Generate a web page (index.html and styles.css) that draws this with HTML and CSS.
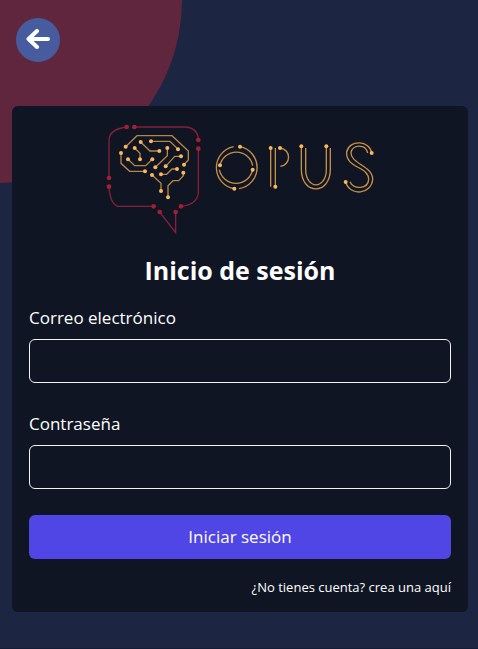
FILE: index.html
```html
<!DOCTYPE html>
<html lang="es">
<head>
<meta charset="utf-8">
<meta name="viewport" content="width=device-width, initial-scale=1">
<title>Opus</title>
<link rel="stylesheet" href="styles.css">
</head>
<body>
<div class="backdrop"></div>
<header class="topbar">
  <button class="back" type="button" aria-label="Volver">
    <svg width="24" height="20" viewBox="0 0 24 20" aria-hidden="true"><path d="M11 2 2.500 10l8.500 8M3 10h19"/></svg>
  </button>
</header>
<main class="card">
  <svg class="logo" viewBox="0 0 840 360" role="img" aria-label="Opus">
    <g class="bubble">
      <path d="M80 27Q27 34 27 67V180M103 27H258Q295 32 295 66M295 92V225Q291 260 243 265M27 206Q30 258 55 265H161M179 282 227 344V282"/>
      <g class="dots">
        <circle cx="80" cy="27" r="7"/><circle cx="103" cy="27" r="7"/><circle cx="295" cy="66" r="7"/><circle cx="295" cy="92" r="7"/>
        <circle cx="27" cy="180" r="7"/><circle cx="27" cy="206" r="7"/><circle cx="161" cy="265" r="7"/><circle cx="243" cy="265" r="7"/>
        <circle cx="179" cy="282" r="7"/><circle cx="227" cy="282" r="7"/>
      </g>
    </g>
    <g class="brain">
      <path d="M77 86 111 53H216L265 99V126L252 140M63 105V136L89 160H135M122 72 150 99H178M153 70H210L234 94M104 90 120 106V124M84 124 104 143H137L157 124M202 90V113L166 148M243 115H224L197 145M183 169H200L216 153H231M156 171 183 196V219M250 164V173L236 188H219L204 203V238"/>
      <g class="dots">
        <circle cx="77" cy="86" r="6"/><circle cx="252" cy="140" r="6"/><circle cx="63" cy="105" r="6"/><circle cx="135" cy="160" r="6"/>
        <circle cx="122" cy="72" r="6"/><circle cx="178" cy="99" r="6"/><circle cx="153" cy="70" r="6"/><circle cx="234" cy="94" r="6"/>
        <circle cx="104" cy="90" r="6"/><circle cx="120" cy="124" r="6"/><circle cx="84" cy="124" r="6"/><circle cx="157" cy="124" r="6"/>
        <circle cx="202" cy="90" r="6"/><circle cx="166" cy="148" r="6"/><circle cx="243" cy="115" r="6"/><circle cx="197" cy="145" r="6"/>
        <circle cx="183" cy="169" r="6"/><circle cx="231" cy="153" r="6"/><circle cx="156" cy="171" r="6"/><circle cx="183" cy="219" r="6"/>
        <circle cx="250" cy="164" r="6"/><circle cx="204" cy="238" r="6"/>
      </g>
    </g>
    <g class="letters" transform="translate(315 36)">
      <path d="M86 50A64 64 0 0 0 88 176M105 50A64 64 0 0 1 102 176M45 106A50 50 0 0 1 143 107M43 119A51 51 0 0 0 143 119"/>
      <path d="M197 53V170M211 54V170M225 54C260 58 258 106 226 109"/>
      <g class="dots">
        <circle cx="105" cy="50" r="6"/><circle cx="45" cy="106" r="6"/><circle cx="143" cy="119" r="6"/><circle cx="88" cy="176" r="6"/>
        <circle cx="197" cy="54" r="6"/><circle cx="225" cy="54" r="6"/><circle cx="211" cy="170" r="6"/>
      </g>
    </g>
    <g class="letters" transform="translate(570 36)">
      <path d="M34 49V118C34 196 121 196 121 118V54M47 54V118C47 180 109 180 109 118V49"/>
      <path d="M245 69C240 31 178 27 170 66C167 116 236 108 236 148C234 178 192 180 180 155M233 69C227 41 187 42 183 68C182 101 248 108 248 147C246 193 180 201 167 156"/>
      <g class="dots">
        <circle cx="34" cy="49" r="6"/><circle cx="109" cy="49" r="6"/><circle cx="245" cy="69" r="6"/><circle cx="167" cy="156" r="6"/>
      </g>
    </g>
  </svg>
  <h1 class="title">Inicio de sesión</h1>
  <form class="form">
    <div class="field">
      <label for="email">Correo electrónico</label>
      <input id="email" type="email">
    </div>
    <div class="field">
      <label for="password">Contraseña</label>
      <input id="password" type="password">
    </div>
    <button class="submit" type="submit">Iniciar sesión</button>
  </form>
  <a class="signup" href="#">¿No tienes cuenta? crea una aquí</a>
</main>
</body>
</html>
```
FILE: styles.css
```css
* { box-sizing: border-box; }

body {
  margin: 0;
  min-height: 100vh;
  padding: 18px 10px 36px 12px;
  border-bottom: 1px solid #151c33;
  background: #1c2541;
  color: #fff;
  font-family: "Segoe UI", "Open Sans", "Noto Sans", sans-serif;
  font-size: 17px;
  line-height: 24px;
}

/* Quarter disc behind the top-left corner */
.backdrop {
  position: absolute;
  top: 0;
  left: 0;
  z-index: -1;
  width: 182px;
  height: 183px;
  border-bottom-right-radius: 100%;
  background: #60263e;
}

.topbar {
  display: flex;
  padding-left: 4px;
  margin-bottom: 44px;
}

.back {
  display: flex;
  align-items: center;
  justify-content: center;
  width: 44px;
  height: 44px;
  padding: 0 0 2px;
  border: 0;
  border-radius: 50%;
  background: #465c9f;
}

.back path {
  fill: none;
  stroke: #fff;
  stroke-width: 4;
  stroke-linecap: round;
  stroke-linejoin: round;
}

.card {
  display: flex;
  flex-direction: column;
  padding: 12px 17px 15px;
  border-radius: 6px;
  background: #0f1523;
}

.logo {
  align-self: center;
  width: 280px;
  max-width: 100%;
  height: auto;
  fill: none;
  stroke-width: 4;
}

.bubble { stroke: #86203a; }
.bubble .dots { fill: #a51f33; stroke: none; }
.brain { stroke: #b98545; }
.letters { stroke: #c58f49; }
.brain .dots, .letters .dots { fill: #fcb65d; stroke: none; }

.title {
  margin: 16px 0 20px;
  font-size: 25px;
  line-height: 32px;
  text-align: center;
}

.form {
  display: flex;
  flex-direction: column;
}

.field {
  display: flex;
  flex-direction: column;
  gap: 9px;
}

.field + .field { margin-top: 29px; }

.field input {
  width: 100%;
  height: 44px;
  padding: 0 12px;
  border: 1px solid #f3f0fa;
  border-radius: 6px;
  background: transparent;
  color: inherit;
  font: inherit;
}

.submit {
  height: 44px;
  margin-top: 26px;
  border: 0;
  border-radius: 6px;
  background: #4f46e5;
  color: #fff;
  font: inherit;
}

.signup {
  align-self: flex-end;
  margin-top: 18px;
  color: #fff;
  font-size: 13px;
  line-height: 20px;
  text-decoration: none;
}
```
